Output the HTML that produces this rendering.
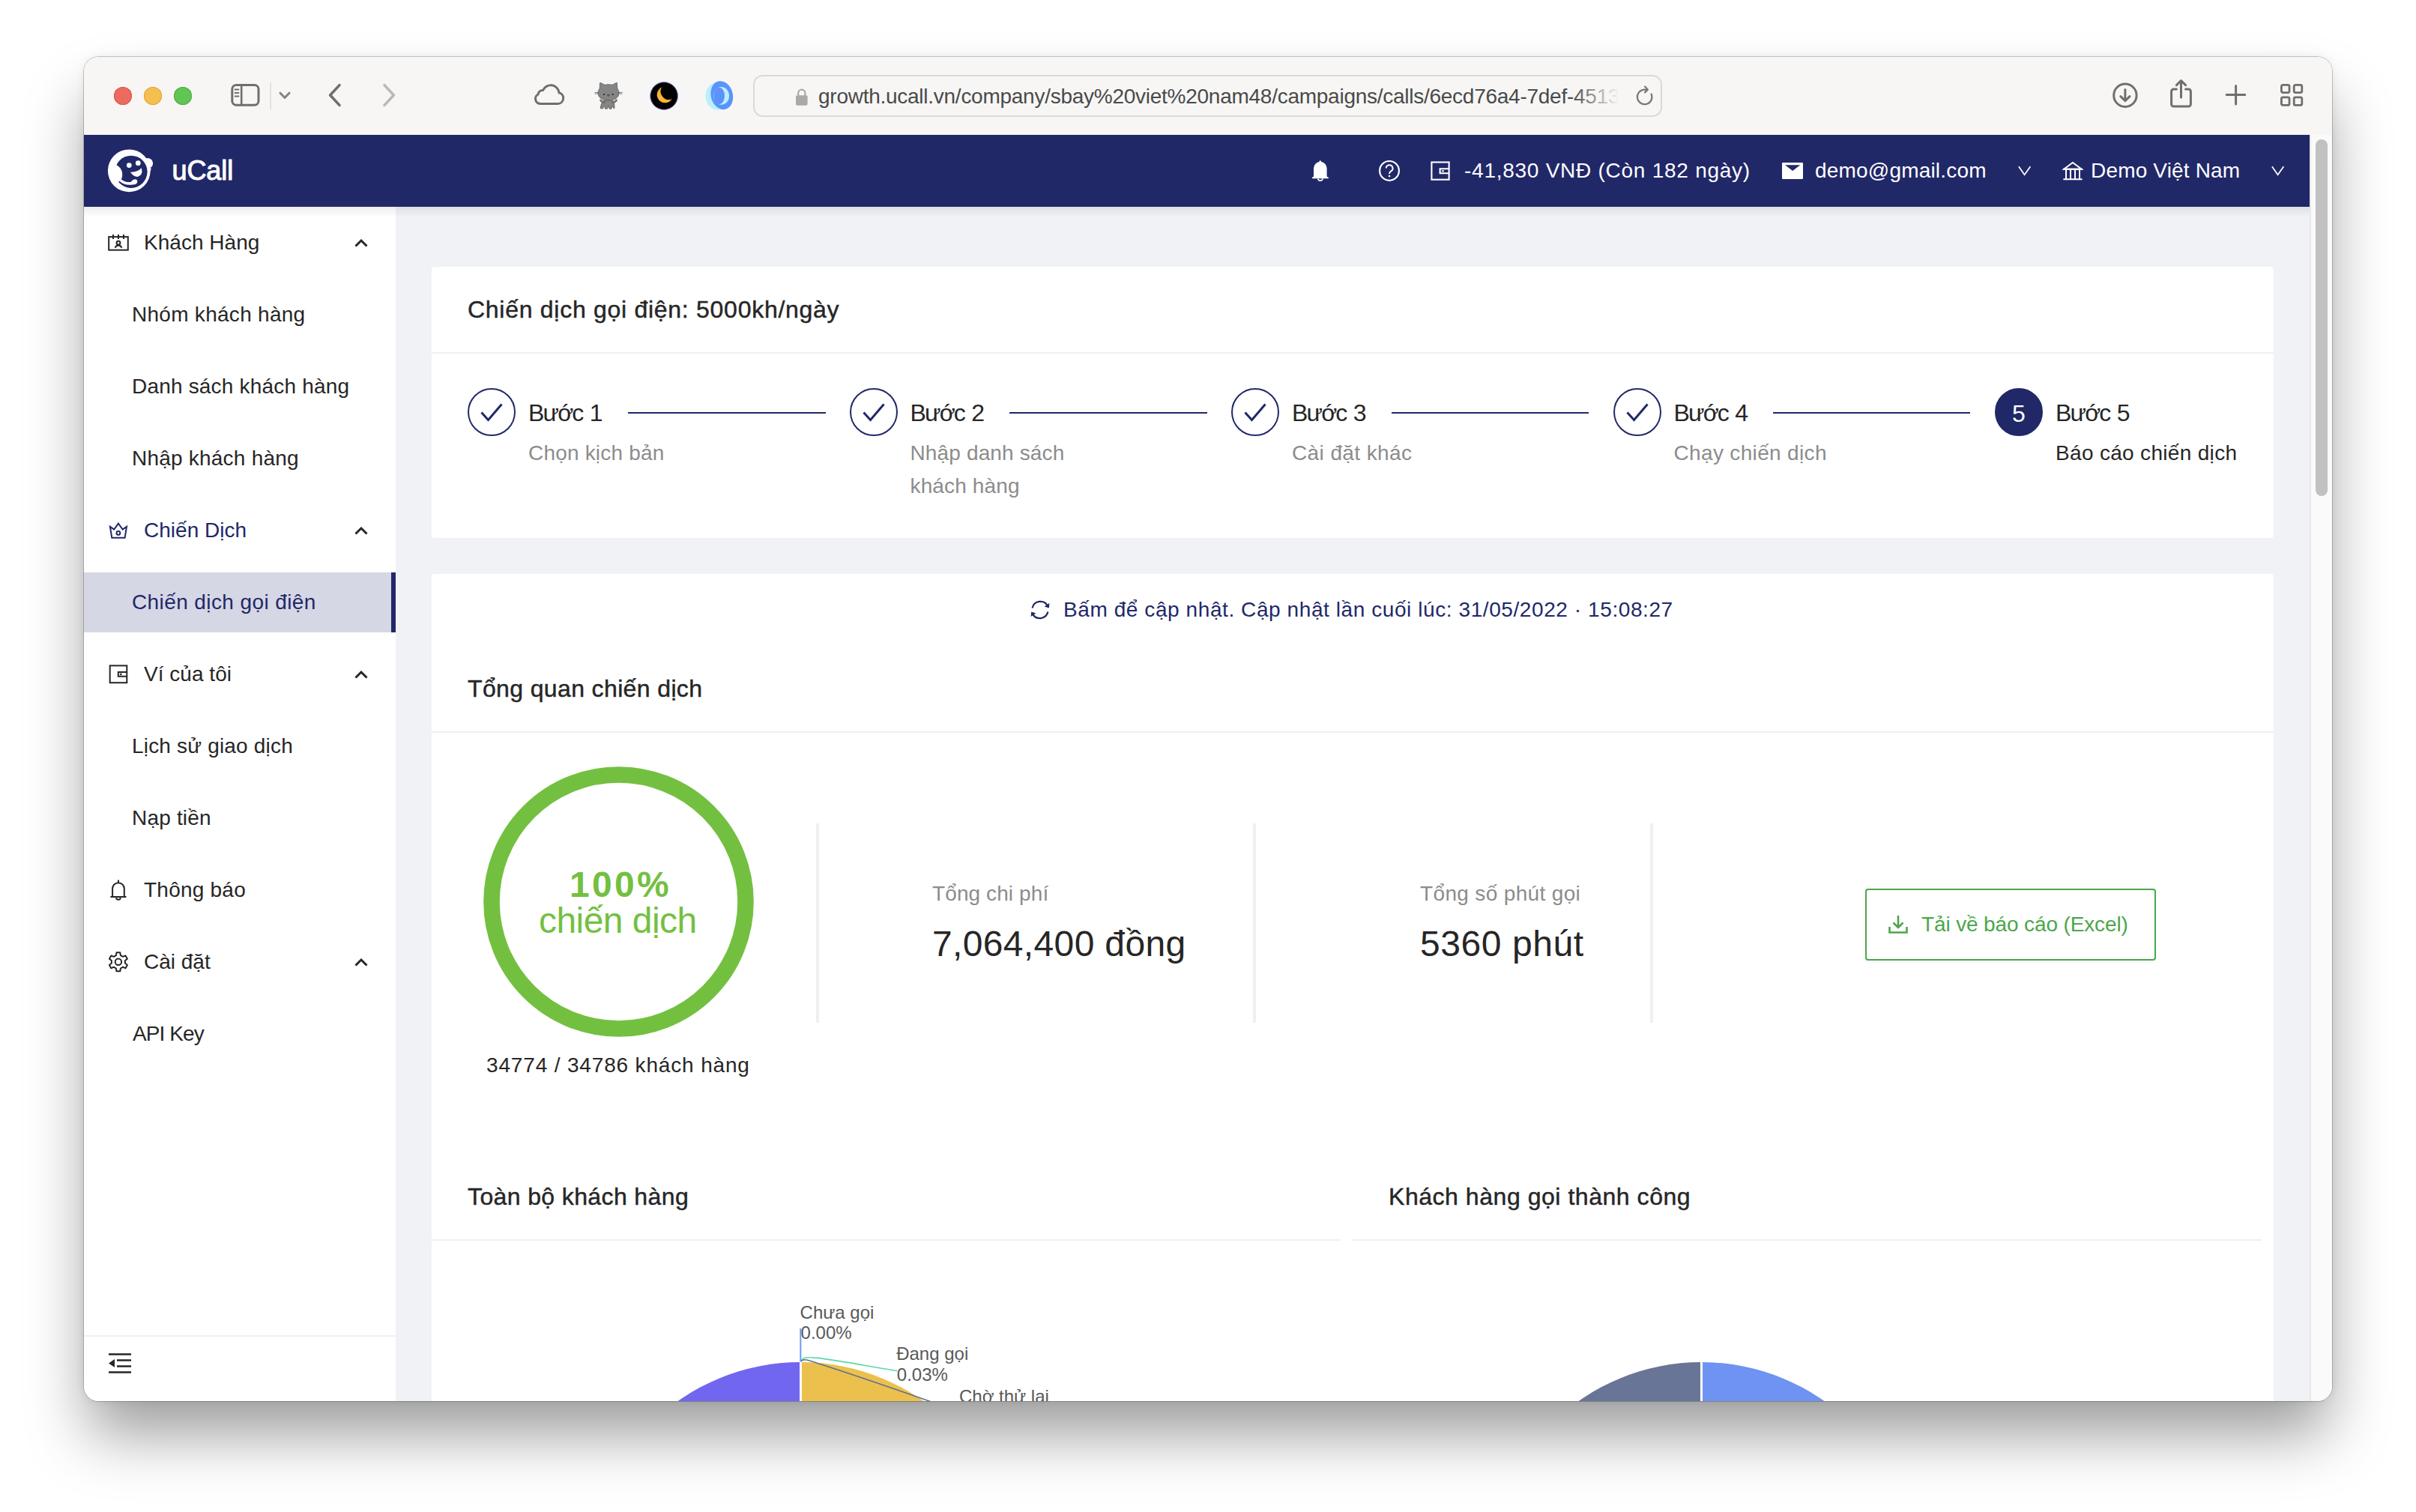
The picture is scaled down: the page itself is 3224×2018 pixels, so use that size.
<!DOCTYPE html>
<html lang="vi">
<head>
<meta charset="utf-8">
<title>uCall - Chiến dịch gọi điện</title>
<style>
*{box-sizing:border-box;margin:0;padding:0}
html,body{width:3224px;height:2018px;overflow:hidden;background:#fff}
body{font-family:"Liberation Sans",sans-serif;color:#262626;position:relative;font-size:28px;line-height:1}
.abs{position:absolute}
.t{position:absolute;white-space:nowrap;line-height:1;transform-origin:0 0}
svg{position:absolute;overflow:visible}
/* window */
#shadow{position:absolute;left:112px;top:76px;width:3000px;height:1794px;border-radius:20px;
  box-shadow:0 0 0 1px rgba(0,0,0,.2),0 50px 82px -6px rgba(0,0,0,.39),0 0 12px rgba(0,0,0,.08);background:#fff}
#win{position:absolute;left:112px;top:76px;width:3000px;height:1794px;border-radius:20px;overflow:hidden;background:#f0f2f5}
#pg{position:absolute;left:-112px;top:-76px;width:3224px;height:2018px}
/* toolbar */
#tb{left:112px;top:76px;width:3000px;height:104px;background:#f7f6f5}
.light{position:absolute;top:116px;width:24px;height:24px;border-radius:50%}
#url{left:1005px;top:100px;width:1213px;height:56px;border:2px solid #dad9d8;border-radius:13px;background:#f7f6f5}
/* header */
#hd{left:112px;top:180px;width:2970px;height:96px;background:#212868}
#hdsh{left:112px;top:276px;width:2970px;height:14px;background:linear-gradient(rgba(0,21,41,.08),rgba(0,21,41,0))}
.w{color:#fff}
/* scrollbar */
#sbt{left:3082px;top:180px;width:30px;height:1700px;background:#fafafa;border-left:2px solid #e8e8e8}
#sbh{left:3090px;top:186px;width:16px;height:476px;border-radius:8px;background:#c1c1c1}
/* sidebar */
#side{left:112px;top:276px;width:416px;height:1600px;background:#fff}
.mi{position:absolute;left:112px;width:416px;height:80px}
.mi .t{top:26px}
.sel{background:#d6d7e4;border-right:6px solid #212868}
.navy{color:#212868}
/* cards */
.card{position:absolute;background:#fff;border-radius:4px}
.hr{position:absolute;height:2px;background:#f0f0f0}
.h16{font-size:32px;color:#262626;-webkit-text-stroke:.45px #262626}
.gray{color:#8c8c8c}
.stepc{position:absolute;width:64px;height:64px;border-radius:50%;border:2px solid #212868;top:518px}
.stepl{position:absolute;height:2px;top:550px;background:#212868}
.vd{position:absolute;width:4px;top:1099px;height:266px;background:#f0f0f0}
</style>
</head>
<body>
<div id="shadow"></div>
<div id="win"><div id="pg">

<!-- ============ SAFARI TOOLBAR ============ -->
<div id="tb" class="abs"></div>
<div id="url" class="abs"></div>
<div class="light" style="left:152px;background:#ed6a5e;box-shadow:inset 0 0 0 1px #d5584c"></div>
<div class="light" style="left:192px;background:#f5bf4f;box-shadow:inset 0 0 0 1px #d9a43c"></div>
<div class="light" style="left:232px;background:#61c554;box-shadow:inset 0 0 0 1px #52a842"></div>
<svg style="left:306px;top:110px" width="44" height="34" viewBox="0 0 44 34" fill="none" stroke="#6f6f6f">
<rect x="3.8" y="3.4" width="35.2" height="26.8" rx="5.5" stroke-width="3"/><path d="M16.2 3.4V30.2" stroke-width="2.6"/><path d="M7.6 9.6H12.4M7.6 14.1H12.4M7.6 18.6H12.4" stroke-width="2" stroke-linecap="round"/></svg>
<div class="abs" style="left:360px;top:110px;width:2px;height:36px;background:#e2e1e0"></div>
<svg style="left:372px;top:122px" width="16" height="11" viewBox="0 0 16 11"><path d="M2 2.2L8 8.4L14 2.2" fill="none" stroke="#858585" stroke-width="3" stroke-linecap="round" stroke-linejoin="round"/></svg>
<svg style="left:437px;top:111px" width="20" height="32" viewBox="0 0 20 32"><path d="M16 2.6L3.6 16L16 29.4" fill="none" stroke="#6f6f6f" stroke-width="3.6" stroke-linecap="round" stroke-linejoin="round"/></svg>
<svg style="left:509px;top:111px" width="20" height="32" viewBox="0 0 20 32"><path d="M4 2.6L16.4 16L4 29.4" fill="none" stroke="#b9b9b9" stroke-width="3.6" stroke-linecap="round" stroke-linejoin="round"/></svg>
<svg style="left:710px;top:108px" width="46" height="36" viewBox="0 0 46 36"><path d="M11 30.4H34.4a7.4 7.4 0 0 0 1.6-14.6a11.2 11.2 0 0 0-21.4-3.4a6.2 6.2 0 0 0-6.6 5.6A6.6 6.6 0 0 0 11 30.4Z" fill="none" stroke="#6f6f6f" stroke-width="3" stroke-linejoin="round"/></svg>
<svg style="left:780px;top:100px" width="64" height="56" viewBox="0 0 64 56">
<g fill="#858585" stroke="#5a5a5a" stroke-width="0.8">
<path d="M25 34Q22 38 21 44.6L24.4 45L27 41L27.6 45.2H30.4L31.8 41L33.2 45.2H36L36.8 41L39.2 45L40 44.6Q40.6 38 37.8 34Z"/>
<path d="M20.5 33.2Q21 37.5 27 37.4L27 35.5Q23 35.6 22.6 33Z"/><path d="M43.6 33.2Q43 37.5 37 37.4L37 35.5Q41 35.6 41.5 33Z"/>
<path d="M20.2 18L20.6 10.6Q21.4 10 22.6 11L26.8 13.2Q32 12.2 37.2 13.2L41.4 11Q42.6 10 43.4 10.6L43.8 18Q46.4 21.2 46 25Q45 33.6 32 33.6Q19 33.6 18 25Q17.6 21.2 20.2 18Z"/>
</g>
<path d="M13.4 23.4H19M13.8 25.4L19 24.6M45 23.4H50.8M45 24.6L50.4 25.4" stroke="#5a5a5a" stroke-width="0.8" fill="none"/>
<circle cx="26" cy="26" r="1.1" fill="#222"/><circle cx="37.6" cy="26" r="1.1" fill="#222"/><ellipse cx="31.8" cy="27.2" rx="1.4" ry="1" fill="#666" stroke="#333" stroke-width=".5"/>
</svg>
<svg style="left:866px;top:108px" width="40" height="40" viewBox="0 0 40 40"><defs><linearGradient id="mg" x1="0" y1="1" x2="1" y2="0"><stop offset="0" stop-color="#fbc53a"/><stop offset="1" stop-color="#ef9430"/></linearGradient></defs>
<circle cx="20.1" cy="20" r="18.4" fill="#020203" stroke="#8484e0" stroke-width="0.9"/>
<path d="M17 8.6A10.8 10.8 0 1 0 30.6 24.2A11 11 0 0 1 17 8.6Z" fill="url(#mg)"/></svg>
<svg style="left:940px;top:108px" width="42" height="40" viewBox="0 0 42 40">
<ellipse cx="18.2" cy="20" rx="16.7" ry="18.8" fill="#b9efff"/>
<ellipse cx="23.3" cy="19.2" rx="14.6" ry="19.2" fill="#5b93fb" transform="rotate(-14 23.3 19.2)"/>
<ellipse cx="22.6" cy="19.9" rx="10.4" ry="11.9" fill="#b9efff"/><ellipse cx="19.7" cy="20" rx="7.3" ry="11.2" fill="#5b93fb"/></svg>
<svg style="left:1061px;top:117px" width="18" height="25" viewBox="0 0 18 25"><rect x="1" y="10.2" width="15.6" height="13.6" rx="2" fill="#a9a9a9"/><path d="M4.2 11V7.2a4.6 4.6 0 0 1 9.2 0V11" fill="none" stroke="#a9a9a9" stroke-width="2.2"/></svg>
<svg style="left:2180px;top:112px" width="28" height="30" viewBox="0 0 28 30" fill="none" stroke="#787878" stroke-width="2.2" stroke-linecap="round" stroke-linejoin="round"><path d="M23.6 13.4A9.8 9.8 0 1 1 14 7.6H18"/><path d="M15 3.6L18.8 7.6L15 11.4"/></svg>
<svg style="left:2817px;top:109px" width="38" height="38" viewBox="0 0 38 38" fill="none" stroke="#6f6f6f" stroke-width="3" stroke-linecap="round" stroke-linejoin="round"><circle cx="18.9" cy="18.2" r="15.2"/><path d="M18.9 10.4V25.4M12.8 19.6L18.9 25.6L25 19.6"/></svg>
<svg style="left:2893px;top:104px" width="36" height="42" viewBox="0 0 36 42" fill="none" stroke="#6f6f6f" stroke-width="3" stroke-linecap="round" stroke-linejoin="round"><path d="M11.4 15H7.6a3 3 0 0 0-3 3V35a3 3 0 0 0 3 3H27.4a3 3 0 0 0 3-3V18a3 3 0 0 0-3-3H23.6"/><path d="M17.5 4V26M11.4 9.6L17.5 3.6L23.6 9.6"/></svg>
<svg style="left:2969px;top:112px" width="30" height="30" viewBox="0 0 30 30"><path d="M14.6 2.4V27M2.2 14.6H26.8" fill="none" stroke="#6f6f6f" stroke-width="3" stroke-linecap="round"/></svg>
<svg style="left:3041px;top:110px" width="34" height="34" viewBox="0 0 34 34" fill="none" stroke="#6f6f6f" stroke-width="2.8"><rect x="3.4" y="3.4" width="10.6" height="10.2" rx="2"/><rect x="20.2" y="3.4" width="10.6" height="10.2" rx="2"/><rect x="3.4" y="19.8" width="10.6" height="10.6" rx="2"/><rect x="20.2" y="19.8" width="10.6" height="10.6" rx="2"/></svg>
<div class="t" id="urltxt" style="left:1092px;top:113px;font-size:28px;color:#4a4a4a;letter-spacing:-.26px;width:1070px;overflow:hidden;height:40px;line-height:32px">growth.ucall.vn/company/sbay%20viet%20nam48/campaigns/calls/6ecd76a4-7def-4513-a1b2</div>
<div class="abs" style="left:2098px;top:104px;width:68px;height:48px;background:linear-gradient(90deg,rgba(247,246,245,0),#f7f6f5 92%)"></div>

<!-- ============ APP HEADER ============ -->
<div id="hd" class="abs"></div>
<div class="t w" id="brand" style="left:229.5px;top:210px;font-size:36px;font-weight:400;-webkit-text-stroke:1px #fff;letter-spacing:-.1px">uCall</div>
<svg style="left:136px;top:192px" width="80" height="72" viewBox="0 0 80 72">
<circle cx="36.3" cy="35.8" r="28.4" fill="#fff"/><circle cx="61.2" cy="26" r="6.9" fill="#fff"/><path d="M58 30L66 33L63.5 38L60 44Z" fill="#fff"/>
<circle cx="39" cy="37.3" r="21.6" fill="#212868"/>
<path d="M18.3 27.4Q27.5 32 27.3 41Q27 45 25.9 47.4Q31 51.6 38.6 51Q40.6 47.2 45 47.2Q47.6 48 47.3 51Q46.5 54.6 40.5 54.6Q30 56 23.5 49.8L19.2 52.2Q14 45 15 36Q16 31 18.3 27.4Z" fill="#fff"/>
<circle cx="36.3" cy="28.6" r="3.4" fill="#fff"/><circle cx="48.3" cy="25.7" r="3.4" fill="#fff"/>
<path d="M38 37.7Q47 38.2 52.8 32.3Q55.6 41.8 47.6 43.9Q41.6 43.6 38 37.7Z" fill="#fff"/>
</svg>
<svg style="left:1730px;top:196px" width="60" height="60" viewBox="0 0 60 60" fill="#fff">
<path d="M23 39.8V28.6a8.8 8.8 0 0 1 17.6 0V39.8L42.7 40.6V42.2H21.1V40.6Z"/><rect x="30.6" y="18.2" width="2.4" height="4" rx="1.2"/>
<path d="M28.6 42.4a3.3 3.3 0 0 0 6.5 0" fill="none" stroke="#fff" stroke-width="1.6"/></svg>
<svg style="left:1838px;top:212px" width="32" height="32" viewBox="0 0 32 32" fill="none" stroke="#fff">
<circle cx="16" cy="15.9" r="12.9" stroke-width="2.2"/><path d="M11.7 12.6a4.4 4.4 0 1 1 6.6 3.8c-1.6 1-2.3 1.8-2.3 3.6" stroke-width="2"/><circle cx="16" cy="23" r="1.3" fill="#fff" stroke="none"/></svg>
<svg style="left:1906px;top:212px" width="32" height="32" viewBox="0 0 32 32" fill="none" stroke="#fff" stroke-width="2.1">
<rect x="4.4" y="4.5" width="23.2" height="23.2"/><path d="M27.6 13.2H15.6V19.2H27.6"/><circle cx="19.4" cy="16.2" r="1.3" fill="#fff" stroke="none"/></svg>
<svg style="left:2378px;top:217px" width="28" height="22" viewBox="0 0 28 22"><rect width="28" height="22" rx="1.2" fill="#fff"/><path d="M4 3.2H24.3L14.2 11Z" fill="#212868"/></svg>
<svg style="left:2693.4px;top:221px" width="18" height="14" viewBox="0 0 18 14"><path d="M0.9 1.2L8.6 12.3L16.4 1.2" fill="none" stroke="#fff" stroke-width="1.8"/></svg>
<svg style="left:3031.4px;top:221px" width="18" height="14" viewBox="0 0 18 14"><path d="M0.9 1.2L8.6 12.3L16.4 1.2" fill="none" stroke="#fff" stroke-width="1.8"/></svg>
<svg style="left:2750px;top:212px" width="32" height="32" viewBox="0 0 32 32" fill="none" stroke="#fff" stroke-width="2">
<path d="M4.2 13.7L15.9 5L27.7 13.7Z" stroke-linejoin="miter"/><path d="M3 13.7H28.8M3.4 27.2H28.6M7 14V26.4M13 14V26.4M19 14V26.4M25 14V26.4"/></svg>
<div class="t w" id="bal" style="left:1954px;top:214px;font-size:28px;letter-spacing:0.74px">-41,830 VNĐ (Còn 182 ngày)</div>
<div class="t w" id="mail" style="left:2422px;top:214px;font-size:28px;letter-spacing:0.19px">demo@gmail.com</div>
<div class="t w" id="comp" style="left:2790px;top:214px;font-size:28px;letter-spacing:0.17px">Demo Việt Nam</div>

<!-- ============ SCROLLBAR ============ -->
<div id="sbt" class="abs"></div>
<div id="sbh" class="abs"></div>

<!-- ============ SIDEBAR ============ -->
<div id="side" class="abs"></div>
<div class="mi" style="top:284px"><svg style="left:20px;top:12px" width="60" height="60" viewBox="0 0 60 60" fill="none" stroke="#262626" stroke-width="2"><rect x="13.2" y="20.1" width="25.6" height="17.6"/><path d="M19 17v6M26 17v6M33 17v6"/><circle cx="26" cy="28.2" r="2.4"/><path d="M21.6 34.8a4.6 4.6 0 0 1 8.8 0"/></svg><div class="t" id="m0" style="left:80px;letter-spacing:0.03px">Khách Hàng</div><svg style="left:361px;top:35px" width="18" height="11" viewBox="0 0 18 11"><path d="M1.5 9.5 L9 2 L16.5 9.5" fill="none" stroke="#262626" stroke-width="3"/></svg></div>
<div class="mi" style="top:380px"><div class="t" id="m1" style="left:64px;letter-spacing:0.28px">Nhóm khách hàng</div></div>
<div class="mi" style="top:476px"><div class="t" id="m2" style="left:64px;letter-spacing:0.19px">Danh sách khách hàng</div></div>
<div class="mi" style="top:572px"><div class="t" id="m3" style="left:64px;letter-spacing:0.22px">Nhập khách hàng</div></div>
<div class="mi" style="top:668px"><svg style="left:20px;top:12px" width="60" height="60" viewBox="0 0 60 60" fill="none" stroke="#212868" stroke-width="2"><path d="M14.9 22.9L20.2 26.6L25.9 18.6L31.7 26.6L37 22.9L34.6 37.7H17.3Z"/><circle cx="25.9" cy="31.4" r="2.4"/></svg><div class="t navy" id="m4" style="left:80px;letter-spacing:0.01px">Chiến Dịch</div><svg style="left:361px;top:35px" width="18" height="11" viewBox="0 0 18 11"><path d="M1.5 9.5 L9 2 L16.5 9.5" fill="none" stroke="#262626" stroke-width="3"/></svg></div>
<div class="mi sel" style="top:764px"><div class="t navy" id="m5" style="left:64px;letter-spacing:0.4px">Chiến dịch gọi điện</div></div>
<div class="mi" style="top:860px"><svg style="left:20px;top:12px" width="60" height="60" viewBox="0 0 60 60" fill="none" stroke="#262626" stroke-width="2"><rect x="14.7" y="16.4" width="22.6" height="22.8"/><path d="M37.3 25.1H25.8V30.8H37.3"/><circle cx="29.3" cy="27.9" r="1.3" fill="#262626" stroke="none"/></svg><div class="t" id="m6" style="left:80px;letter-spacing:0.03px">Ví của tôi</div><svg style="left:361px;top:35px" width="18" height="11" viewBox="0 0 18 11"><path d="M1.5 9.5 L9 2 L16.5 9.5" fill="none" stroke="#262626" stroke-width="3"/></svg></div>
<div class="mi" style="top:956px"><div class="t" id="m7" style="left:64px;letter-spacing:0.19px">Lịch sử giao dịch</div></div>
<div class="mi" style="top:1052px"><div class="t" id="m8" style="left:64px;letter-spacing:0.19px">Nạp tiền</div></div>
<div class="mi" style="top:1148px"><svg style="left:20px;top:12px" width="60" height="60" viewBox="0 0 60 60" fill="none" stroke="#262626" stroke-width="2"><path d="M18.1 37.1V26a7.85 7.85 0 0 1 15.7 0V37.1M15.4 37.1H36.5M25.95 14.4V18M23 38.2a3 3 0 0 0 5.9 0"/></svg><div class="t" id="m9" style="left:80px;letter-spacing:0.23px">Thông báo</div></div>
<div class="mi" style="top:1244px"><svg style="left:20px;top:12px" width="60" height="60" viewBox="0 0 60 60" fill="none" stroke="#262626" stroke-width="2"><path d="M22.90 19.10 L23.48 15.33 L28.32 15.33 L28.90 19.10 L31.94 20.86 L35.48 19.47 L37.91 23.67 L34.93 26.04 L34.93 29.56 L37.91 31.93 L35.48 36.13 L31.94 34.74 L28.90 36.50 L28.32 40.27 L23.48 40.27 L22.90 36.50 L19.86 34.74 L16.32 36.13 L13.89 31.93 L16.87 29.56 L16.87 26.04 L13.89 23.67 L16.32 19.47 L19.86 20.86Z" stroke-linejoin="round"/><circle cx="25.9" cy="27.8" r="4.2"/></svg><div class="t" id="m10" style="left:80px">Cài đặt</div><svg style="left:361px;top:35px" width="18" height="11" viewBox="0 0 18 11"><path d="M1.5 9.5 L9 2 L16.5 9.5" fill="none" stroke="#262626" stroke-width="3"/></svg></div>
<div class="mi" style="top:1340px"><div class="t" id="m11" style="left:65px;letter-spacing:-.9px">API Key</div></div>
<div class="hr" style="left:112px;top:1782px;width:416px"></div>
<svg style="left:145px;top:1806px" width="30" height="27" viewBox="0 0 30 27"><path d="M0 1.5H30M11 9.5H30M11 17.5H30M0 25.5H30" stroke="#262626" stroke-width="2.6" fill="none"/><path d="M0 13.5L8 8V19Z" fill="#262626"/></svg>

<!-- ============ CONTENT ============ -->
<div class="card" style="left:576px;top:356px;width:2458px;height:362px"></div>
<div class="t h16" id="c1t" style="left:624px;top:397px;letter-spacing:0.72px">Chiến dịch gọi điện: 5000kh/ngày</div>
<div class="hr" style="left:576px;top:470px;width:2458px"></div>
<div class="stepc" style="left:624px"></div>
<svg style="left:641px;top:538px" width="30" height="26" viewBox="0 0 30 26"><path d="M1.5 12.5 L10.5 22.5 L28.5 1.5" fill="none" stroke="#212868" stroke-width="3"/></svg>
<div class="stepl" style="left:838px;width:264px"></div>
<div class="t" id="st0" style="left:705px;top:535px;font-size:32px;letter-spacing:-1.8px;word-spacing:2px">Bước 1</div>
<div class="t gray" id="sd0" style="left:705px;top:591px;font-size:28px;line-height:44px;margin-top:-8px;letter-spacing:0.19px">Chọn kịch bản</div>
<div class="stepc" style="left:1133.5px"></div>
<svg style="left:1150.5px;top:538px" width="30" height="26" viewBox="0 0 30 26"><path d="M1.5 12.5 L10.5 22.5 L28.5 1.5" fill="none" stroke="#212868" stroke-width="3"/></svg>
<div class="stepl" style="left:1347px;width:264px"></div>
<div class="t" id="st1" style="left:1214.5px;top:535px;font-size:32px;letter-spacing:-1.8px;word-spacing:2px">Bước 2</div>
<div class="t gray" id="sd1" style="left:1214.5px;top:591px;font-size:28px;line-height:44px;margin-top:-8px;letter-spacing:0.14px">Nhập danh sách<br>khách hàng</div>
<div class="stepc" style="left:1643px"></div>
<svg style="left:1660px;top:538px" width="30" height="26" viewBox="0 0 30 26"><path d="M1.5 12.5 L10.5 22.5 L28.5 1.5" fill="none" stroke="#212868" stroke-width="3"/></svg>
<div class="stepl" style="left:1857px;width:263px"></div>
<div class="t" id="st2" style="left:1724px;top:535px;font-size:32px;letter-spacing:-1.8px;word-spacing:2px">Bước 3</div>
<div class="t gray" id="sd2" style="left:1724px;top:591px;font-size:28px;line-height:44px;margin-top:-8px;letter-spacing:0.4px">Cài đặt khác</div>
<div class="stepc" style="left:2152.5px"></div>
<svg style="left:2169.5px;top:538px" width="30" height="26" viewBox="0 0 30 26"><path d="M1.5 12.5 L10.5 22.5 L28.5 1.5" fill="none" stroke="#212868" stroke-width="3"/></svg>
<div class="stepl" style="left:2366px;width:263px"></div>
<div class="t" id="st3" style="left:2233.5px;top:535px;font-size:32px;letter-spacing:-1.8px;word-spacing:2px">Bước 4</div>
<div class="t gray" id="sd3" style="left:2233.5px;top:591px;font-size:28px;line-height:44px;margin-top:-8px;letter-spacing:0.34px">Chạy chiến dịch</div>
<div class="stepc" style="left:2662px;background:#212868"></div>
<div class="t w" style="left:2685px;top:536px;font-size:32px">5</div>
<div class="t" id="st4" style="left:2743px;top:535px;font-size:32px;letter-spacing:-1.8px;word-spacing:2px">Bước 5</div>
<div class="t" id="sd4" style="left:2743px;top:591px;font-size:28px;line-height:44px;margin-top:-8px;letter-spacing:0.32px">Báo cáo chiến dịch</div>
<div class="card" style="left:576px;top:766px;width:2458px;height:1200px"></div>
<svg style="left:1374px;top:800px" width="28" height="28" viewBox="0 0 28 28"><g fill="none" stroke="#212868" stroke-width="2.3"><path d="M3.6 11.4A11 11 0 0 1 24 8.6"/><path d="M24.4 16.6A11 11 0 0 1 4 19.4"/></g><path d="M26.4 5L25.8 11.4L19.6 9.4Z" fill="#212868"/><path d="M1.6 23L2.2 16.6L8.4 18.6Z" fill="#212868"/></svg>
<div class="t navy" id="upd" style="left:1419px;top:800px;font-size:28px;letter-spacing:0.58px">Bấm để cập nhật. Cập nhật lần cuối lúc: 31/05/2022 · 15:08:27</div>
<div class="t h16" id="c2t" style="left:624px;top:903px;letter-spacing:0.37px">Tổng quan chiến dịch</div>
<div class="hr" style="left:576px;top:976px;width:2458px"></div>
<svg style="left:645px;top:1023px" width="361" height="361" viewBox="0 0 361 361"><circle cx="180.5" cy="180.5" r="169.5" fill="none" stroke="#73c041" stroke-width="21.6"/></svg>
<div class="t" id="pct" style="left:760px;top:1157px;font-size:48px;font-weight:700;color:#73c041;letter-spacing:3.3px">100%</div>
<div class="t" id="cd" style="left:719px;top:1205px;font-size:48px;color:#73c041;letter-spacing:-0.55px">chiến dịch</div>
<div class="t" id="cnt" style="left:649px;top:1408px;font-size:28px;letter-spacing:0.84px">34774 / 34786 khách hàng</div>
<div class="vd" style="left:1089px"></div>
<div class="vd" style="left:1672px"></div>
<div class="vd" style="left:2202px"></div>
<div class="t gray" id="s1t" style="left:1244px;top:1179px;font-size:28px;letter-spacing:0.1px">Tổng chi phí</div>
<div class="t" id="s1v" style="left:1244px;top:1236px;font-size:48px;letter-spacing:0.35px">7,064,400 đồng</div>
<div class="t gray" id="s2t" style="left:1895px;top:1179px;font-size:28px;letter-spacing:0.35px">Tổng số phút gọi</div>
<div class="t" id="s2v" style="left:1895px;top:1236px;font-size:48px;letter-spacing:0.58px">5360 phút</div>
<div class="abs" style="left:2489px;top:1186px;width:388px;height:96px;border:2px solid #4ca64c;border-radius:4px;box-shadow:0 4px 0 rgba(0,0,0,.016)"></div>
<svg style="left:2520px;top:1222px" width="26" height="24" viewBox="0 0 26 24"><path d="M13 0V15M6.5 9.5L13 16L19.5 9.5M1.5 15V22.5H24.5V15" fill="none" stroke="#4ca64c" stroke-width="2.6"/></svg>
<div class="t" id="btn" style="left:2564px;top:1220px;font-size:28px;color:#4ca64c;letter-spacing:-0.13px">Tải về báo cáo (Excel)</div>
<div class="t h16" id="c3t" style="left:624px;top:1581px;letter-spacing:0.38px">Toàn bộ khách hàng</div>
<div class="hr" style="left:576px;top:1654px;width:1213px"></div>
<div class="t h16" id="c4t" style="left:1853px;top:1581px;letter-spacing:0.54px">Khách hàng gọi thành công</div>
<div class="hr" style="left:1805px;top:1654px;width:1213px"></div>
<svg style="left:781.8px;top:1815.8000000000002px" width="573.0" height="573.0" viewBox="781.8 1815.8000000000002 573.0 573.0"><path d="M1068.3 2102.3V1817.8000000000002A284.5 284.5 0 0 0 1068.3 2386.8Z" fill="#7166f0"/><path d="M1068.3 2102.3V1817.8000000000002A284.5 284.5 0 0 1 1068.3 2386.8Z" fill="#ecc04c"/><path d="M1068.3 1816.8000000000002V2102.3" stroke="#fff" stroke-width="3"/></svg>
<svg style="left:1983.5px;top:1816.0px" width="573.0" height="573.0" viewBox="1983.5 1816.0 573.0 573.0"><path d="M2270 2102.5V1818.0A284.5 284.5 0 0 0 2270 2387.0Z" fill="#687596"/><path d="M2270 2102.5V1818.0A284.5 284.5 0 0 1 2270 2387.0Z" fill="#6e93f2"/><path d="M2270 1817.0V2102.5" stroke="#fff" stroke-width="3"/></svg>
<svg style="left:1060px;top:1760px" width="260" height="130" viewBox="1060 1760 260 130" fill="none">
<path d="M1068.3 1773V1817.4" stroke="#6b9bf6" stroke-width="2"/>
<path d="M1068.8 1816.4C1071 1811 1078 1811.2 1090 1812.4C1120 1815.5 1170 1825.6 1197.2 1829.6" stroke="#5ad8a6" stroke-width="1.6"/>
<path d="M1068.8 1817.2C1070.5 1814 1074.5 1813.8 1082 1816.4C1120 1828.6 1180 1848.6 1240 1870L1281 1884" stroke="#5d7092" stroke-width="1.6"/>
</svg>
<div class="t" id="pl0" style="left:1067.6px;top:1739.5px;font-size:24px;color:#595959">Chưa gọi</div>
<div class="t" id="pl1" style="left:1068.6px;top:1766.6px;font-size:24px;color:#595959">0.00%</div>
<div class="t" id="pl2" style="left:1196.2px;top:1795.4px;font-size:24px;color:#595959">Đang gọi</div>
<div class="t" id="pl3" style="left:1196.8px;top:1822.5px;font-size:24px;color:#595959">0.03%</div>
<div class="t" id="pl4" style="left:1280px;top:1851.7px;font-size:24px;color:#595959">Chờ thử lại</div>

<div id="hdsh" class="abs"></div>
</div></div>
</body>
</html>
